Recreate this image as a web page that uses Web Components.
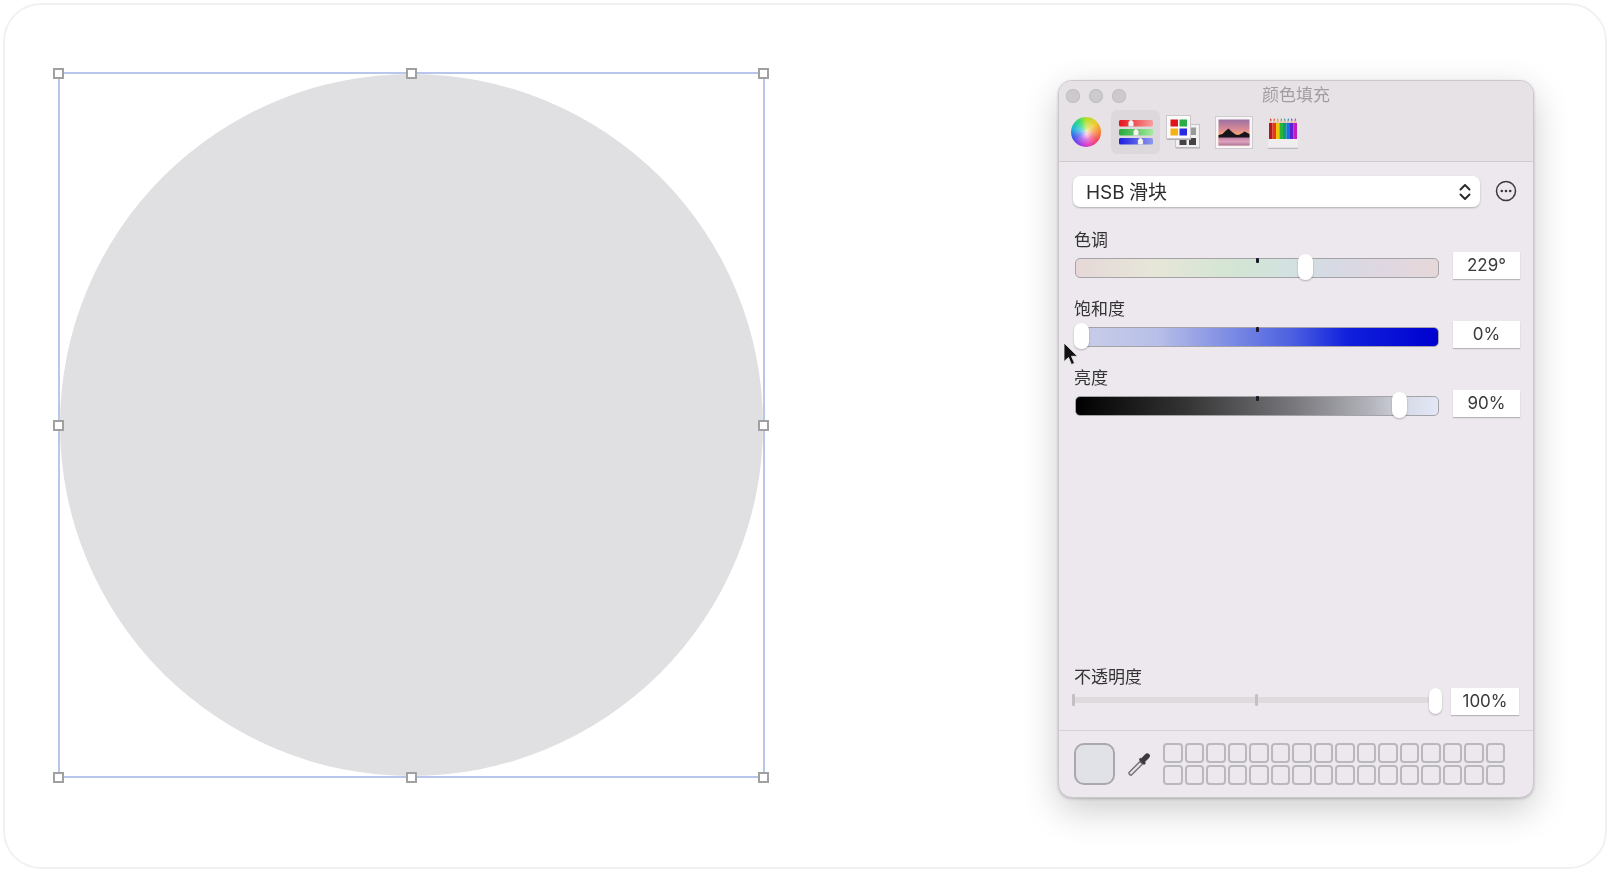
<!DOCTYPE html>
<html lang="zh">
<head>
<meta charset="utf-8">
<title>颜色填充</title>
<style>
    html, body { margin: 0; background: #fff; }
    body { font-family: "Inter", "Noto Sans CJK SC", sans-serif; }
</style>
</head>
<body>

<template id="app-frame">
    <style>
        :host {
            display: flex;
            align-items: flex-start;
            box-sizing: border-box;
            width: 1604px;
            height: 866px;
            margin: 3px;
            padding: 67px 0 0 52.5px;
            border: 2px solid #f1f1f1;
            border-radius: 38px;
            background: #fff;
            position: relative;
        }
        ::slotted(color-panel) { margin: 8px 0 0 293.5px; }
    </style>
    <slot></slot>
</template>

<template id="selection-box">
    <style>
        :host {
            display: block;
            position: relative;
            flex: none;
            width: 707px;
            height: 706px;
            box-sizing: border-box;
            border: 2px solid #b9c6ec;
        }
        .shape { width: 100%; height: 100%; border-radius: 50%; background: #e0e0e2; filter: blur(.4px); }
        i {
            position: absolute;
            width: 11px;
            height: 11px;
            box-sizing: border-box;
            margin: -5.5px 0 0 -5.5px;
            border: 2px solid #a0a0a0;
            background: #fff;
        }
        .l { left: -1px; } .c { left: 50%; } .r { left: calc(100% + 1px); }
        .t { top: -1px; } .m { top: 50%; } .b { top: calc(100% + 1px); }
    </style>
    <div class="shape"></div>
    <i class="l t"></i><i class="c t"></i><i class="r t"></i>
    <i class="l m"></i><i class="r m"></i>
    <i class="l b"></i><i class="c b"></i><i class="r b"></i>
</template>

<template id="color-panel">
    <style>
        :host {
            display: flex;
            flex-direction: column;
            flex: none;
            box-sizing: border-box;
            width: 476px;
            height: 718px;
            border: 1px solid #cbc8cb;
            border-radius: 14px;
            background: #ece8ee;
            box-shadow: 0 12px 36px rgba(0,0,0,.2), 0 1px 3px rgba(0,0,0,.2);
            overflow: hidden;
            color: #333;
            filter: blur(.35px);
        }
        .head { height: 80px; flex: none; background: #e6e2e6; border-bottom: 1px solid #cfcccf; }
        .title { display: flex; align-items: center; height: 29px; position: relative; }
        .lights { display: flex; gap: 9px; padding-left: 7px; margin-top: 1px; }
        .lights i { width: 14px; height: 14px; border-radius: 50%; background: #cdcacd; box-shadow: inset 0 0 0 1px #c2bfc2; }
        .name {
            position: absolute;
            left: 0;
            right: 0;
            top: 2px;
            text-align: center;
            font-size: 17px;
            line-height: 24px;
            color: #a19da1;
        }
        .body { flex: 1; display: flex; flex-direction: column; padding: 14px 13px 0 15px; min-height: 0; }
        .sliders { display: flex; flex-direction: column; gap: 19px; margin-top: 22px; }
        .opacity { margin-top: auto; padding-bottom: 15px; }
        ::slotted(color-wells) { flex: none; }
    </style>
    <div class="head">
        <div class="title">
            <div class="lights"><i></i><i></i><i></i></div>
            <div class="name"><slot name="title"></slot></div>
        </div>
        <slot name="toolbar"></slot>
    </div>
    <div class="body">
        <slot name="mode"></slot>
        <div class="sliders"><slot name="slider"></slot></div>
        <div class="opacity"><slot name="opacity"></slot></div>
    </div>
    <slot name="footer"></slot>
</template>

<template id="panel-toolbar">
    <style>
        :host { display: flex; padding-left: 3px; }
        div { width: 49px; height: 44px; display: flex; align-items: center; justify-content: center; border-radius: 6px; }
        div.on { background: #dcd8dc; }
        svg { display: block; }
        .wheel {
            width: 30px;
            height: 30px;
            margin-left: -2px;
            border-radius: 50%;
            background:
                radial-gradient(circle at 52% 55%, rgba(255,255,255,.85) 0, rgba(255,255,255,.35) 28%, rgba(255,255,255,0) 62%),
                conic-gradient(#b4e02c, #f0c828 50deg, #f58a2c 85deg, #f03a4a 125deg, #e62ab0 165deg, #9c2ee6 205deg, #3c52ea 245deg, #22b4dc 285deg, #2cdc78 325deg, #b4e02c);
        }
    </style>
    <div><span class="wheel"></span></div>
    <div class="on">
        <svg width="36" height="28" viewBox="0 0 36 28">
            <defs>
                <linearGradient id="r"><stop offset="0" stop-color="#e8101a"/><stop offset="1" stop-color="#f7a0a0"/></linearGradient>
                <linearGradient id="g"><stop offset="0" stop-color="#26a83a"/><stop offset="1" stop-color="#a4ec9c"/></linearGradient>
                <linearGradient id="b"><stop offset="0" stop-color="#1d1de0"/><stop offset="1" stop-color="#8e9aec"/></linearGradient>
            </defs>
            <rect x="1" y="2" width="34" height="6.500" rx="1.500" fill="url(#r)"/>
            <rect x="1" y="11" width="34" height="6.500" rx="1.500" fill="url(#g)"/>
            <rect x="1" y="20" width="34" height="6.500" rx="1.500" fill="url(#b)"/>
            <path d="M10.500 4l2.500-2.500 2.500 2.500v4.500h-5zM15.500 13l2.500-2.500 2.500 2.500v4.500h-5zM20 22l2.500-2.500 2.500 2.500v4.500h-5z" fill="#f4f2f2" stroke="#bbb" stroke-width=".4"/>
        </svg>
    </div>
    <div>
        <svg width="34" height="34" viewBox="0 0 34 34" style="margin-left:-3px;overflow:visible">
            <rect x="9.500" y="9.500" width="24" height="23" fill="#f2f0f1" stroke="#c6c3c6"/>
            <path d="M10 33h24" stroke="#b0adb0"/>
            <rect x="23" y="12.500" width="7" height="7.500" fill="#9a9a9a"/>
            <rect x="13.500" y="23" width="7" height="7" fill="#444"/>
            <rect x="23" y="23" width="7" height="7" fill="#444"/>
            <rect x=".5" y=".5" width="24" height="23" fill="#fbfafa" stroke="#cbc8cb"/>
            <path d="M1 24.500h24" stroke="#b0adb0"/>
            <rect x="4.500" y="4.500" width="7.500" height="7" fill="#e0141c"/>
            <rect x="13.500" y="4.500" width="7.500" height="7" fill="#2cab46"/>
            <rect x="4.500" y="13.500" width="7.500" height="7" fill="#f6b213"/>
            <rect x="13.500" y="13.500" width="7.500" height="7" fill="#2a2ae0"/>
        </svg>
    </div>
    <div>
        <svg width="38" height="33" viewBox="0 0 38 33">
            <defs>
                <linearGradient id="sky" x2="0" y2="1"><stop offset="0" stop-color="#9c6fa4"/><stop offset=".4" stop-color="#dc8c92"/><stop offset=".62" stop-color="#f8b06c"/></linearGradient>
                <linearGradient id="lake" x2="0" y2="1"><stop offset="0" stop-color="#b87ca4"/><stop offset=".55" stop-color="#e0a2bc"/><stop offset="1" stop-color="#a8769e"/></linearGradient>
            </defs>
            <rect x=".5" y=".5" width="37" height="32" fill="#f7f5f6" stroke="#cfccd0"/>
            <rect x="3.500" y="3.500" width="31" height="26" fill="url(#sky)"/>
            <rect x="3.500" y="21" width="31" height="8.500" fill="url(#lake)"/>
            <path d="M3.500 19l4-1 3-3 3-2.500 3 3 4 3 3 .5 4-2 2-1.500 2 1 3 1.500v3.500H3.500z" fill="#17141c"/>
        </svg>
    </div>
    <div>
        <svg width="30" height="33" viewBox="0 0 30 33">
            <path d="M0 23h30v8.500q0 1.500-1.500 1.500h-27q-1.500 0-1.500-1.500z" fill="#efedee"/>
            <path d="M0 31.800h30V33H0z" fill="#bdbabd"/>
            <path d="M1 7h3.500v16H1z" fill="#b8141c"/>
            <path d="M4.500 7H8v16H4.500z" fill="#e63a14"/>
            <path d="M8 7h3.500v16H8z" fill="#eec40e"/>
            <path d="M11.500 7H15v16h-3.500z" fill="#28b43a"/>
            <path d="M15 7h3.500v16H15z" fill="#0f9a78"/>
            <path d="M18.500 7H22v16h-3.500z" fill="#1a6ee6"/>
            <path d="M22 7h3.500v16H22z" fill="#5a22d2"/>
            <path d="M25.500 7H29v16h-3.500z" fill="#c41cc0"/>
            <path d="M1 7l1.750-5L4.500 7zM4.500 7l1.750-5L8 7zM8 7l1.750-5 1.750 5zM11.500 7l1.750-5L15 7zM15 7l1.750-5 1.750 5zM18.500 7l1.750-5L22 7zM22 7l1.750-5 1.750 5zM25.500 7l1.750-5L29 7z" fill="#e2c4ac"/>
            <path d="M2 4.500l.75-2.500.75 2.500z" fill="#b8141c"/>
            <path d="M5.500 4.500l.75-2.500.75 2.500z" fill="#e63a14"/>
            <path d="M9 4.500l.75-2.500.75 2.500z" fill="#c8a00e"/>
            <path d="M12.500 4.500l.75-2.500.75 2.500z" fill="#28b43a"/>
            <path d="M16 4.500l.75-2.500.75 2.500z" fill="#0f9a78"/>
            <path d="M19.500 4.500l.75-2.500.75 2.500z" fill="#1a6ee6"/>
            <path d="M23 4.500l.75-2.500.75 2.500z" fill="#5a22d2"/>
            <path d="M26.500 4.500l.75-2.500.75 2.500z" fill="#c41cc0"/>
        </svg>
    </div>
</template>

<template id="mode-select">
    <style>
        :host { display: flex; align-items: center; margin-left: -1px; }
        .box {
            flex: none;
            box-sizing: border-box;
            width: 407px;
            height: 31px;
            display: flex;
            align-items: center;
            justify-content: space-between;
            padding: 0 8px 0 13px;
            background: #fff;
            border-radius: 7px;
            box-shadow: 0 1px 2px rgba(0,0,0,.25);
            font-size: 19px;
            color: #2e2e2e;
        }
        .box span { padding-bottom: 3px; word-spacing: -1px; }
        .more { margin: -1px 0 0 15px; display: block; }
    </style>
    <div class="box">
        <span><slot></slot></span>
        <svg width="14" height="20" viewBox="0 0 14 20" fill="none" stroke="#2b2b2b" stroke-width="2" stroke-linecap="round" stroke-linejoin="round"><path d="M2.500 7.500L7 3l4.500 4.500M2.500 12.500L7 17l4.500-4.500"/></svg>
    </div>
    <svg class="more" width="22" height="22" viewBox="0 0 22 22"><circle cx="11" cy="11" r="9.500" fill="none" stroke="#3a3a3a" stroke-width="1.500"/><circle cx="6.800" cy="11" r="1.300" fill="#3a3a3a"/><circle cx="11" cy="11" r="1.300" fill="#3a3a3a"/><circle cx="15.200" cy="11" r="1.300" fill="#3a3a3a"/></svg>
</template>

<template id="hsb-slider">
    <style>
        :host { display: block; }
        .label { height: 22px; font-size: 17px; line-height: 22px; color: #333; }
        .row { display: flex; margin-top: 1px; height: 27px; }
        .track {
            position: relative;
            flex: none;
            box-sizing: border-box;
            width: 364px;
            height: 20px;
            margin: 6px 0 0 1px;
            border: 1.5px solid #a5a2a8;
            border-radius: 5px;
            background: var(--track);
        }
        .tick { position: absolute; left: 180px; top: -1.500px; width: 3px; height: 5px; border-radius: 1px; background: #1a1a2a; }
        .thumb {
            position: absolute;
            top: -5.500px;
            width: 15px;
            height: 26px;
            margin-left: -7.500px;
            border-radius: 7px;
            background: #fff;
            box-shadow: 0 1px 2px rgba(0,0,0,.25);
        }
        .value {
            flex: none;
            box-sizing: border-box;
            width: 67px;
            height: 27px;
            margin-left: 14px;
            background: #fff;
            box-shadow: 0 1px 1px rgba(0,0,0,.22);
            text-align: center;
            font-size: 17px;
            line-height: 26px;
            color: #3a3a3a;
        }
    </style>
    <div class="label"><slot></slot></div>
    <div class="row">
        <div class="track"><span class="tick"></span><span class="thumb"></span></div>
        <div class="value"></div>
    </div>
</template>

<template id="opacity-slider">
    <style>
        :host { display: block; }
        .label { height: 22px; font-size: 17px; line-height: 22px; color: #333; }
        .row { display: flex; height: 27px; margin-left: -2px; }
        .line { position: relative; flex: none; width: 362px; height: 27px; }
        .rail { position: absolute; left: 0; right: 0; top: 9px; height: 6px; background: #dedade; }
        .line i { position: absolute; top: 6px; width: 3px; height: 12px; background: #c4c1c5; border-radius: 1px; }
        .thumb {
            position: absolute;
            left: 357px;
            top: 0;
            width: 13px;
            height: 26px;
            border-radius: 7px;
            background: #fff;
            box-shadow: 0 1px 2px rgba(0,0,0,.25);
        }
        .value {
            flex: none;
            width: 68px;
            height: 27px;
            margin-left: 17px;
            background: #fff;
            box-shadow: 0 1px 1px rgba(0,0,0,.22);
            text-align: center;
            font-size: 17px;
            line-height: 26px;
            color: #3a3a3a;
        }
    </style>
    <div class="label"><slot></slot></div>
    <div class="row">
        <div class="line"><span class="rail"></span><i style="left:0"></i><i style="left:183px"></i><span class="thumb"></span></div>
        <div class="value"></div>
    </div>
</template>

<template id="color-wells">
    <style>
        :host {
            display: flex;
            align-items: center;
            box-sizing: border-box;
            height: 67px;
            padding: 0 0 0 15px;
            border-top: 1.500px solid #d6d3d7;
        }
        .current {
            flex: none;
            box-sizing: border-box;
            width: 41px;
            height: 42px;
            border: 2px solid #aaa8ac;
            border-radius: 10px;
            background: #e0e2e8;
        }
        svg { flex: none; margin: 0 10px 0 12px; display: block; }
        .grid { display: grid; grid-template-columns: repeat(16, 19.500px); grid-auto-rows: 20px; gap: 2px; }
        .grid i { box-sizing: border-box; border: 2px solid #bbb8bc; border-radius: 4px; }
    </style>
    <div class="current"></div>
    <svg width="26" height="26" viewBox="0 0 26 26">
        <path d="M2.500 23.500l-.7-1.700L13 10.500l2.500 2.500L4.200 24.200z" fill="#e9e7ea" stroke="#77747a" stroke-width="1.500" stroke-linejoin="round"/>
        <path d="M12 9l5 5 2-2-1-1 4-4q2-2.500 0-4t-4 .5l-4 4-1-1z" fill="#3c3a40"/>
    </svg>
    <div class="grid"></div>
</template>

<template id="mouse-cursor">
    <style>
        :host { position: absolute; left: 1058px; top: 337px; display: block; }
        svg { display: block; }
    </style>
    <svg width="18" height="25" viewBox="0 0 18 25"><path d="M1 1v18.500l4.500-4 3 7 3-1.300-3-6.900h6z" fill="#111" stroke="#eee" stroke-width=".8" stroke-linejoin="round"/></svg>
</template>

<app-frame>
    <selection-box></selection-box>
    <color-panel>
        <span slot="title">颜色填充</span>
        <panel-toolbar slot="toolbar"></panel-toolbar>
        <mode-select slot="mode">HSB 滑块</mode-select>
        <hsb-slider slot="slider" value="229°" pos="229" track="linear-gradient(to right,#e6d8d8,#e6e6d8 22%,#d2e5d4 45%,#d2e2e0 58%,#d6dae4 70%,#dfd7e1 85%,#e6d8d8)">色调</hsb-slider>
        <hsb-slider slot="slider" value="0%" pos="5" track="linear-gradient(to right,#c9cee8,#b9c0e8 22%,#4a5fe0 60%,#1020dc 75%,#0000d0)">饱和度</hsb-slider>
        <hsb-slider slot="slider" value="90%" pos="323" track="linear-gradient(to right,#000,#333 30%,#77777c 60%,#b5b6bd 82%,#d8dbe8 92%,#e4e7f6)">亮度</hsb-slider>
        <opacity-slider slot="opacity" value="100%">不透明度</opacity-slider>
        <color-wells slot="footer"></color-wells>
    </color-panel>
    <mouse-cursor></mouse-cursor>
</app-frame>

<script type="text/javascript">
    class TemplateElement extends HTMLElement {
        constructor() {
            super();
            let shadowRoot = this.attachShadow({mode: 'open'});
            shadowRoot.appendChild(document.getElementById(this.localName).content.cloneNode(true));
        }
    }

    class HsbSlider extends TemplateElement {
        connectedCallback() {
            this.style.setProperty('--track', this.getAttribute('track'));
            this.shadowRoot.querySelector('.thumb').style.left = this.getAttribute('pos') + 'px';
            this.shadowRoot.querySelector('.value').textContent = this.getAttribute('value');
        }
    }

    class OpacitySlider extends TemplateElement {
        connectedCallback() {
            this.shadowRoot.querySelector('.value').textContent = this.getAttribute('value');
        }
    }

    class ColorWells extends TemplateElement {
        connectedCallback() {
            // two rows of empty custom colour wells
            this.shadowRoot.querySelector('.grid').innerHTML = '<i></i>'.repeat(32);
        }
    }

    customElements.define('app-frame', class extends TemplateElement {});
    customElements.define('selection-box', class extends TemplateElement {});
    customElements.define('color-panel', class extends TemplateElement {});
    customElements.define('panel-toolbar', class extends TemplateElement {});
    customElements.define('mode-select', class extends TemplateElement {});
    customElements.define('mouse-cursor', class extends TemplateElement {});
    customElements.define('hsb-slider', HsbSlider);
    customElements.define('opacity-slider', OpacitySlider);
    customElements.define('color-wells', ColorWells);
</script>
</body>
</html>
